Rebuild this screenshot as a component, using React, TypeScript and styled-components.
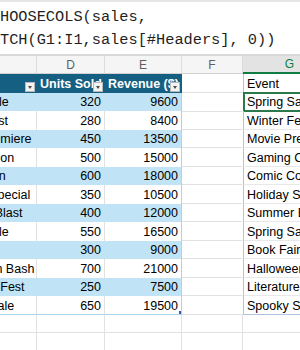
import React from "react";
import styled, { createGlobalStyle, css } from "styled-components";

const GlobalStyle = createGlobalStyle`
  html, body {
    margin: 0;
    padding: 0;
    background: #ffffff;
    overflow: hidden;
  }
  * {
    box-sizing: border-box;
  }
`;

const COLS = "96px 68px 77px 61px 94px";
const ROW_H = 18.5;

const Window = styled.div`
  width: 300px;
  height: 350px;
  overflow: hidden;
  background: #ffffff;
  font-family: "Liberation Sans", Arial, sans-serif;
`;

const FormulaBar = styled.div`
  height: 54px;
  border-top: 2px solid #e6e6e6;
  padding-top: 4.4px;
  background: #ffffff;
  overflow: hidden;
`;

const FormulaText = styled.div`
  margin-left: -18.4px;
  font-family: "Liberation Mono", "DejaVu Sans Mono", monospace;
  font-size: 15.3px;
  line-height: 23px;
  color: #1f1f1f;
  white-space: pre;
`;

const Divider = styled.div`
  height: 2px;
  background: #d9d9d9;
`;

const Grid = styled.div`
  margin-left: -59px;
  width: 396px;
`;

const Row = styled.div<{ $h?: number }>`
  display: grid;
  grid-template-columns: ${COLS};
  height: ${(p) => p.$h ?? ROW_H}px;
`;

const ColHead = styled.div<{ $active?: boolean }>`
  display: flex;
  align-items: center;
  justify-content: center;
  font-size: 12px;
  color: #5f5f5f;
  background: #f5f5f5;
  border-right: 1px solid #dcdcdc;
  border-bottom: 1px solid #d0d0d0;
  ${(p) =>
    p.$active &&
    css`
      background: #e3e3e3;
      color: #107c41;
      border-bottom: 2px solid #107c41;
    `}
`;

const Cell = styled.div<{ $align?: "left" | "right" }>`
  position: relative;
  font-size: 12.5px;
  line-height: 18px;
  padding: 0.5px 3px 0 3px;
  white-space: nowrap;
  overflow: hidden;
  color: #000000;
  text-align: ${(p) => p.$align ?? "left"};
`;

const HeadCell = styled(Cell)`
  background: #156082;
  color: #ffffff;
  font-weight: bold;
`;

const FilterButton = styled.span`
  position: absolute;
  right: 2px;
  bottom: 1px;
  width: 10px;
  height: 10px;
  background: #f3f3f3;
  border: 1px solid #b9b9b9;
  display: flex;
  align-items: flex-end;
  justify-content: center;
  padding-bottom: 2px;
  &::after {
    content: "";
    border-left: 2.5px solid transparent;
    border-right: 2.5px solid transparent;
    border-top: 3px solid #4a4a4a;
  }
`;

const DataCell = styled(Cell)<{ $band: boolean; $last?: boolean; $edge?: boolean }>`
  background: ${(p) => (p.$band ? "#c0e4f5" : "#ffffff")};
  border-right: 1px solid ${(p) => (p.$band ? "#c0e4f5" : "#e1e1e1")};
  ${(p) =>
    p.$edge &&
    css`
      border-right: 1px solid #a9d3ee;
    `}
  ${(p) =>
    p.$last &&
    css`
      border-bottom: 1px solid #a9d3ee;
    `}
`;

const BlankCell = styled.div<{ $noRight?: boolean }>`
  border-right: 1px solid ${(p) => (p.$noRight ? "transparent" : "#e1e1e1")};
  border-bottom: 1px solid #e1e1e1;
`;

const SpillCell = styled(Cell)<{ $selected?: boolean; $last?: boolean }>`
  border-left: 1px solid #aec4e2;
  border-bottom: 1px solid ${(p) => (p.$last ? "#aec4e2" : "#e8e8e8")};
  ${(p) =>
    p.$selected &&
    css`
      overflow: visible;
      &::after {
        content: "";
        position: absolute;
        left: -1px;
        top: -1px;
        right: -1px;
        bottom: -1px;
        border: 2px solid #2a7a4b;
      }
    `}
`;

const ResizeHandle = styled.span`
  position: absolute;
  right: -1px;
  bottom: 0px;
  width: 3px;
  height: 3px;
  background: #2f5fa8;
`;

const data: [string, number, number][] = [
  ["Spring Sale", 320, 9600],
  ["Winter Fest", 280, 8400],
  ["Movie Premiere", 450, 13500],
  ["Gaming Con", 500, 15000],
  ["Comic Con", 600, 18000],
  ["Holiday Special", 350, 10500],
  ["Summer Blast", 400, 12000],
  ["Spring Sale", 550, 16500],
  ["Book Fair", 300, 9000],
  ["Halloween Bash", 700, 21000],
  ["Literature Fest", 250, 7500],
  ["Spooky Sale", 650, 19500],
];

const App: React.FC = () => {
  return (
    <>
      <GlobalStyle />
      <Window>
        <FormulaBar>
          <FormulaText>
            {"=CHOOSECOLS(sales,\nMATCH(G1:I1,sales[#Headers], 0))"}
          </FormulaText>
        </FormulaBar>
        <Divider />
        <Grid>
          <Row $h={18.3}>
            <ColHead>C</ColHead>
            <ColHead>D</ColHead>
            <ColHead>E</ColHead>
            <ColHead>F</ColHead>
            <ColHead $active>G</ColHead>
          </Row>
          <Row>
            <HeadCell>
              Event
              <FilterButton />
            </HeadCell>
            <HeadCell>
              Units Sold
              <FilterButton />
            </HeadCell>
            <HeadCell>
              Revenue ($)
              <FilterButton />
            </HeadCell>
            <BlankCell $noRight />
            <SpillCell>Event</SpillCell>
          </Row>
          {data.map(([name, units, revenue], i) => {
            const band = i % 2 === 0;
            const last = i === data.length - 1;
            return (
              <Row key={i}>
                <DataCell $band={band} $last={last}>
                  {name}
                </DataCell>
                <DataCell $band={band} $last={last} $align="right">
                  {units}
                </DataCell>
                <DataCell $band={band} $last={last} $edge $align="right">
                  {revenue}
                  {last && <ResizeHandle />}
                </DataCell>
                <BlankCell $noRight />
                <SpillCell $selected={i === 0} $last={last}>
                  {name}
                </SpillCell>
              </Row>
            );
          })}
          {[0, 1].map((r) => (
            <Row key={`e${r}`}>
              <BlankCell />
              <BlankCell />
              <BlankCell />
              <BlankCell />
              <BlankCell />
            </Row>
          ))}
        </Grid>
      </Window>
    </>
  );
};

export default App;
